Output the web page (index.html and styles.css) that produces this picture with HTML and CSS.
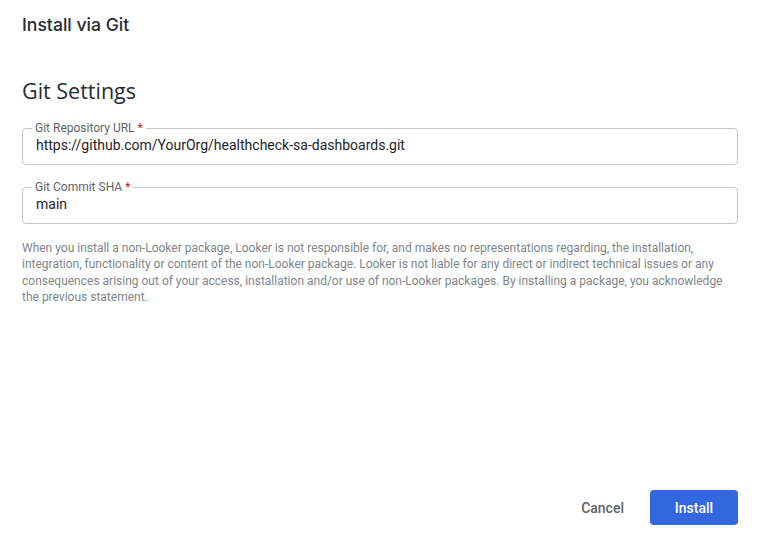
FILE: index.html
```html
<!DOCTYPE html>
<html>
<head>
<meta charset="utf-8">
<link rel="stylesheet" href="styles.css">
</head>
<body>
<div class="dialog">
  <h1 class="title">Install via Git</h1>
  <h2 class="section">Git Settings</h2>
  <fieldset class="field">
    <legend class="label">Git Repository URL <span class="req">*</span></legend>
    <div class="value">https://github.com/YourOrg/healthcheck-sa-dashboards.git</div>
  </fieldset>
  <fieldset class="field">
    <legend class="label">Git Commit SHA <span class="req">*</span></legend>
    <div class="value">main</div>
  </fieldset>
  <p class="notice">When you install a non-Looker package, Looker is not responsible for, and makes no representations regarding, the installation, integration, functionality or content of the non-Looker package. Looker is not liable for any direct or indirect technical issues or any consequences arising out of your access, installation and/or use of non-Looker packages. By installing a package, you acknowledge the previous statement.</p>
  <div class="footer">
    <button class="btn btn-cancel">Cancel</button>
    <button class="btn btn-primary">Install</button>
  </div>
</div>
</body>
</html>
```
FILE: styles.css
```css
html, body {
  margin: 0;
  padding: 0;
  background: #ffffff;
}
body {
  font-family: Roboto, "Liberation Sans", sans-serif;
  color: #262d33;
}
.dialog {
  box-sizing: border-box;
  height: 536px;
  padding: 0 22px 11px;
  display: flex;
  flex-direction: column;
}
.title {
  margin: 14px 0 0;
  font-family: Inter, "Open Sans", Roboto, sans-serif;
  font-size: 17.6px;
  font-weight: 500;
  line-height: 22px;
  color: #262d33;
}
.section {
  margin: 40px 0 0;
  font-family: "Open Sans", Roboto, sans-serif;
  font-size: 21.5px;
  font-weight: 400;
  line-height: 30px;
  color: #262d33;
}
.field {
  margin: 15px 0 0;
  padding: 0 13px 9px;
  border: 1px solid #c6cacf;
  border-radius: 4px;
  min-width: 0;
}
.field + .field {
  margin-top: 15px;
}
.label {
  margin-left: -4px;
  padding: 0 3px;
  font-size: 12px;
  line-height: 14px;
  color: #5f6368;
}
.req {
  color: #c5221f;
}
.value {
  font-size: 14px;
  line-height: 20px;
  color: #1f2326;
}
.notice {
  margin: 16px 0 0;
  font-size: 12px;
  line-height: 16.4px;
  color: #80868b;
}
.footer {
  margin-top: auto;
  display: flex;
  justify-content: flex-end;
  gap: 10px;
}
.btn {
  font-family: Roboto, sans-serif;
  font-size: 14px;
  font-weight: 500;
  height: 35px;
  padding: 0 16px;
  border: none;
  border-radius: 4px;
  background: transparent;
  cursor: pointer;
}
.btn-cancel {
  color: #5f6368;
}
.btn-primary {
  width: 88px;
  background: #3367e0;
  color: #ffffff;
}
```
